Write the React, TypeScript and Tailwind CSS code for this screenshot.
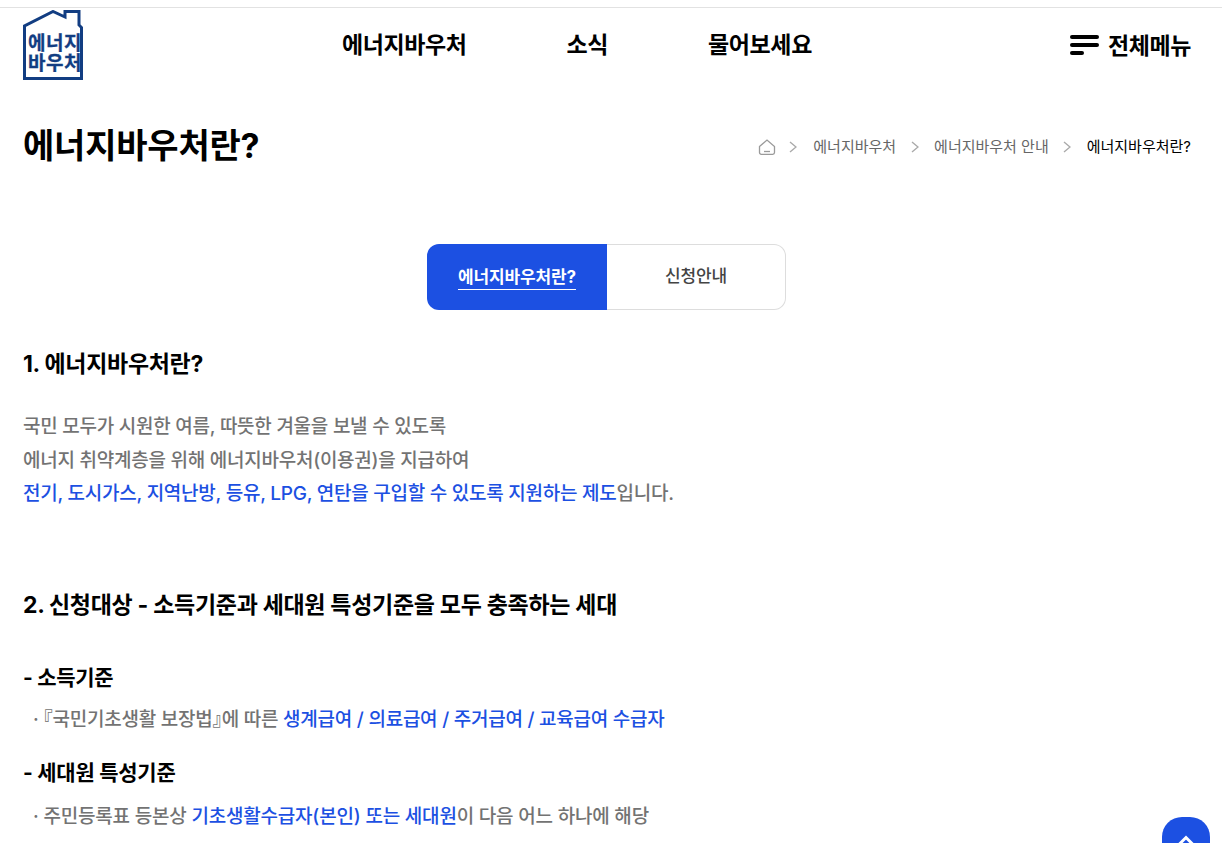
const KR = "font-['Inter','Noto_Sans_CJK_KR',sans-serif]";

function Logo() {
  return (
    <svg width="60" height="71" viewBox="0 0 60 71" className="shrink-0">
      <path
        d="M1.5 68.5V16L30 1.5L42 7V1.5H56V15L58.5 17.5V68.5Z"
        fill="#fff"
        stroke="#123d82"
        strokeWidth="3"
      />
      <text x="32" y="40" textAnchor="middle" fontSize="19" fontWeight="700" fill="#123d82" stroke="#123d82" strokeWidth="0.3" letterSpacing="0.6">
        에너지
      </text>
      <text x="32" y="60" textAnchor="middle" fontSize="19" fontWeight="700" fill="#123d82" stroke="#123d82" strokeWidth="0.3" letterSpacing="0.6">
        바우처
      </text>
    </svg>
  );
}

function Chevron() {
  return (
    <svg width="8" height="12" viewBox="0 0 8 12" fill="none" stroke="#aaaaaa" strokeWidth="1.4" className="shrink-0">
      <path d="M1 1L7 6L1 11" />
    </svg>
  );
}

function HomeIcon() {
  return (
    <svg width="18" height="18" viewBox="0 0 18 18" fill="none" stroke="#9a9a9a" strokeWidth="1.3" className="shrink-0">
      <path d="M1.5 8.5L9 2L16.5 8.5V14.5C16.5 15.6 15.7 16.3 14.7 16.3H3.3C2.3 16.3 1.5 15.6 1.5 14.5Z" />
      <path d="M6 13.5H12" />
    </svg>
  );
}

const navItems = ["에너지바우처", "소식", "물어보세요"];

export default function App() {
  return (
    <div className={`${KR} relative h-[843px] overflow-hidden bg-white text-black`}>
      <div className="mt-[7px] border-t border-[#e2e2e2]" />

      {/* Header */}
      <header className="flex h-[77px] items-start px-[23px] pt-[2px]">
        <Logo />
        <nav className="ml-[259px] flex gap-[100px] pt-[17px] text-[23px] font-bold leading-[36px] tracking-[-0.4px]">
          {navItems.map((item) => (
            <span key={item}>{item}</span>
          ))}
        </nav>
        <div className="ml-auto flex items-center gap-[9px] pr-[8px] pt-[18px] text-[23px] font-bold leading-[36px] tracking-[-0.4px]">
          <div className="mb-[2px] flex w-[29px] flex-col gap-[4px]">
            <span className="h-[4px] w-[29px] rounded-full bg-black" />
            <span className="h-[4px] w-[29px] rounded-full bg-black" />
            <span className="h-[4px] w-[14px] rounded-full bg-black" />
          </div>
          <span>전체메뉴</span>
        </div>
      </header>

      {/* Page title */}
      <div className="mt-[38px] flex items-center justify-between pl-[23px] pr-[31px]">
        <h1 className="text-[34px] font-bold leading-[46px] tracking-[-0.2px]">에너지바우처란?</h1>
        <div className="mt-[2px] flex items-center text-[15px] text-[#666666]">
          <HomeIcon />
          <span className="ml-[13px]"><Chevron /></span>
          <span className="ml-[16px]">에너지바우처</span>
          <span className="ml-[15px]"><Chevron /></span>
          <span className="ml-[15px]">에너지바우처 안내</span>
          <span className="ml-[14px]"><Chevron /></span>
          <span className="ml-[16px] text-black">에너지바우처란?</span>
        </div>
      </div>

      {/* Tabs */}
      <div className="mt-[75px] flex justify-start pl-[427px]">
        <div className="flex h-[66px] w-[359px] text-[17px] font-medium tracking-[-0.15px]">
          <div className="flex w-[180px] items-center justify-center rounded-l-[12px] bg-[#1c50e2] font-bold text-white">
            <span className="border-b border-white leading-[24px]">에너지바우처란?</span>
          </div>
          <div className="flex flex-1 items-center justify-center rounded-r-[12px] border border-l-0 border-[#dddddd] text-[#444444]">
            신청안내
          </div>
        </div>
      </div>

      {/* Content */}
      <main className="px-[23px]">
        <h2 className="mt-[35px] text-[23px] font-bold leading-[38px] tracking-[-0.3px]">1. 에너지바우처란?</h2>
        <div className="mt-[27px] text-[19px] font-medium leading-[33.5px] tracking-[-0.25px] text-[#737373]">
          <p>국민 모두가 시원한 여름, 따뜻한 겨울을 보낼 수 있도록</p>
          <p>에너지 취약계층을 위해 에너지바우처(이용권)을 지급하여</p>
          <p>
            <span className="text-[#1c50e2]">전기, 도시가스, 지역난방, 등유, LPG, 연탄을 구입할 수 있도록 지원하는 제도</span>
            입니다.
          </p>
        </div>

        <h2 className="mt-[75px] text-[23px] font-bold leading-[38px] tracking-[-0.3px]">
          2. 신청대상 - 소득기준과 세대원 특성기준을 모두 충족하는 세대
        </h2>

        <h3 className="mt-[36px] text-[21px] font-bold leading-[36px] tracking-[-0.3px]">- 소득기준</h3>
        <p className="mt-[6px] pl-[10px] text-[19px] font-medium leading-[36px] tracking-[-0.25px] text-[#737373]">
          · <span className="[font-feature-settings:'halt']">『</span>국민기초생활 보장법<span className="[font-feature-settings:'halt']">』</span>에 따른{" "}
          <span className="text-[#1c50e2]">생계급여 / 의료급여 / 주거급여 / 교육급여 수급자</span>
        </p>

        <h3 className="mt-[17px] text-[21px] font-bold leading-[36px] tracking-[-0.25px]">- 세대원 특성기준</h3>
        <p className="mt-[8px] pl-[10px] text-[19px] font-medium leading-[36px] tracking-[-0.2px] text-[#737373]">
          · 주민등록표 등본상 <span className="text-[#1c50e2]">기초생활수급자(본인) 또는 세대원</span>이 다음 어느 하나에 해당
        </p>
      </main>

      {/* Scroll to top */}
      <button className="absolute left-[1162px] top-[817px] flex h-[48px] w-[48px] justify-center rounded-[20px] bg-[#1c50e2] pt-[18px]">
        <svg width="16" height="10" viewBox="0 0 16 10" fill="none" stroke="#fff" strokeWidth="3">
          <path d="M1.5 9L8 2.5L14.5 9" />
        </svg>
      </button>
    </div>
  );
}
